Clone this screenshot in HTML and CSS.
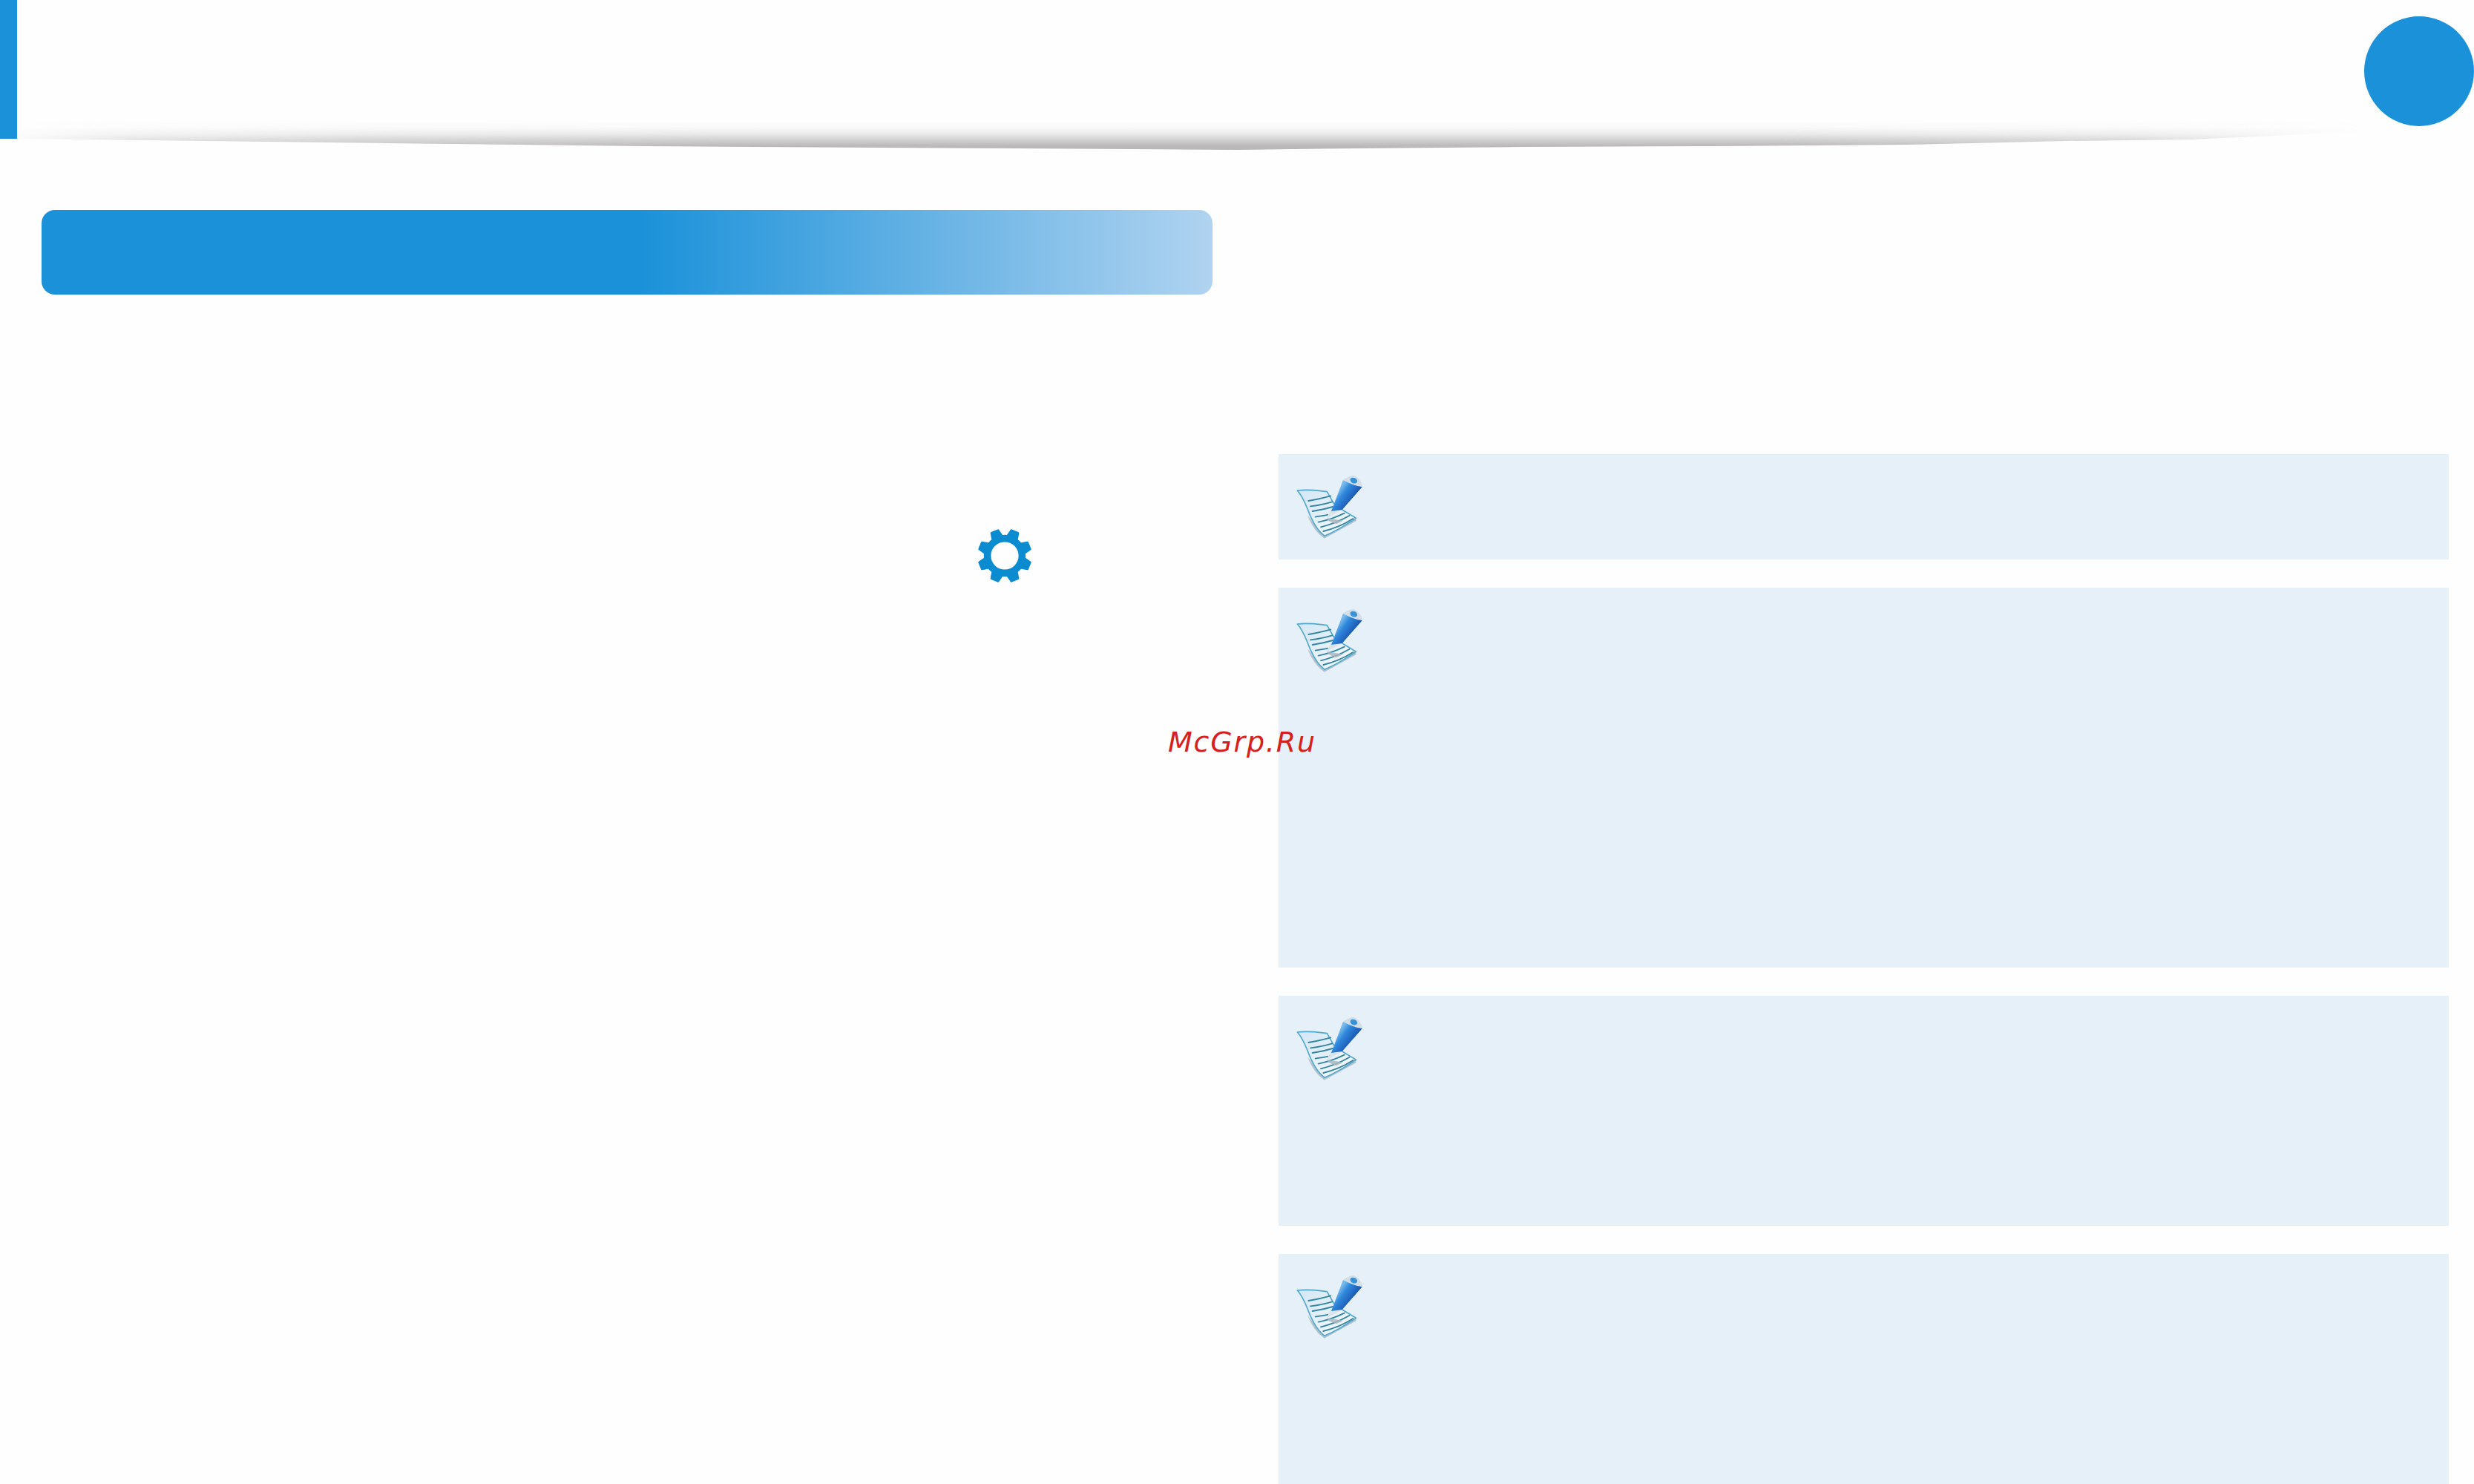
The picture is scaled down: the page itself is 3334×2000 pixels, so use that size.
FILE: index.html
```html
<!DOCTYPE html>
<html lang="ru">
<head>
<meta charset="utf-8">
<title>McGrp.Ru</title>
<link rel="stylesheet" href="styles.css">
</head>
<body>
<svg class="defs" width="0" height="0" aria-hidden="true">
  <defs>
    <linearGradient id="pencilBody" gradientUnits="userSpaceOnUse" x1="195" y1="75" x2="258" y2="122">
      <stop offset="0" stop-color="#74b8ec"/>
      <stop offset="0.3" stop-color="#2f88dc"/>
      <stop offset="0.65" stop-color="#2268c2"/>
      <stop offset="1" stop-color="#154a96"/>
    </linearGradient>
    <linearGradient id="paperFill" x1="0" y1="0" x2="1" y2="1">
      <stop offset="0" stop-color="#d3e7f5"/>
      <stop offset="0.6" stop-color="#e8f2fa"/>
      <stop offset="1" stop-color="#f7fbfe"/>
    </linearGradient>
    <symbol id="noteIcon" viewBox="0 0 315 300">
      <path d="M134 272 C105 252 82 220 66 178 L120 250 L262 192 L262 202 Z" fill="#a6b7c3" opacity=".8"/>
      <path d="M25 78 C60 74 110 78 145 83 L172 130 L210 158 L262 190 C225 215 175 245 135 262 C105 240 85 205 65 150 C55 125 40 95 25 78 Z" fill="url(#paperFill)" stroke="#52a8cc" stroke-width="5" stroke-linejoin="round"/>
      <g fill="none" stroke="#35859f" stroke-width="5.5" stroke-linecap="round">
        <path d="M70 120 C100 115 130 108 160 100"/>
        <path d="M78 142 C110 138 140 132 166 124"/>
        <path d="M86 162 C112 158 140 152 168 144"/>
        <path d="M98 185 C115 182 132 180 150 176"/>
        <path d="M110 206 C150 198 185 185 215 170"/>
        <path d="M120 226 C160 216 200 200 235 180"/>
        <path d="M130 243 C170 233 215 215 250 192"/>
      </g>
      <path d="M146 190 L210 200 L182 214 L150 200 Z" fill="#aab7c0" opacity=".85"/>
      <path d="M162 150 L142 192 L206 156 Z" fill="#dbe4ea"/>
      <path d="M210 36 L287 64 L206 156 L162 162 Z" fill="url(#pencilBody)"/>
      <path d="M210 36 C222 26 240 17 252 17 C270 24 285 42 289 62 C275 64 245 54 210 36 Z" fill="#d3dee8"/>
      <ellipse cx="253" cy="38" rx="15" ry="11" transform="rotate(25 253 38)" fill="#3a92d6"/>
    </symbol>
  </defs>
</svg>
<div class="page">
  <header class="top">
    <div class="edge"></div>
    <div class="shade"></div>
    <div class="dot"></div>
  </header>
  <main class="columns">
    <section class="col-left">
      <div class="banner"></div>
      <svg class="gear" viewBox="-37 -37 74 74" aria-hidden="true">
        <g class="gear-teeth">
          <path d="M-6.5 -27 L-4.8 -35 L4.8 -35 L6.5 -27 Z" transform="rotate(22.5)"/>
          <path d="M-6.5 -27 L-4.8 -35 L4.8 -35 L6.5 -27 Z" transform="rotate(67.5)"/>
          <path d="M-6.5 -27 L-4.8 -35 L4.8 -35 L6.5 -27 Z" transform="rotate(112.5)"/>
          <path d="M-6.5 -27 L-4.8 -35 L4.8 -35 L6.5 -27 Z" transform="rotate(157.5)"/>
          <path d="M-6.5 -27 L-4.8 -35 L4.8 -35 L6.5 -27 Z" transform="rotate(202.5)"/>
          <path d="M-6.5 -27 L-4.8 -35 L4.8 -35 L6.5 -27 Z" transform="rotate(247.5)"/>
          <path d="M-6.5 -27 L-4.8 -35 L4.8 -35 L6.5 -27 Z" transform="rotate(292.5)"/>
          <path d="M-6.5 -27 L-4.8 -35 L4.8 -35 L6.5 -27 Z" transform="rotate(337.5)"/>
        </g>
        <circle class="gear-ring" r="23.4"/>
      </svg>
    </section>
    <section class="col-right">
      <div class="note note-s"><svg class="note-icon"><use href="#noteIcon"/></svg></div>
      <div class="note note-l"><svg class="note-icon"><use href="#noteIcon"/></svg></div>
      <div class="note note-m"><svg class="note-icon"><use href="#noteIcon"/></svg></div>
      <div class="note note-m"><svg class="note-icon"><use href="#noteIcon"/></svg></div>
    </section>
  </main>
  <div class="watermark">McGrp.Ru</div>
</div>
</body>
</html>
```
FILE: styles.css
```css
* { box-sizing: border-box; }
html, body { margin: 0; padding: 0; background: #fefefe; }
.defs { position: absolute; }
.page {
  position: relative;
  width: 3334px;
  height: 2000px;
  overflow: hidden;
  background: #fefefe;
}
.top {
  position: relative;
  height: 187px;
  display: flex;
  justify-content: space-between;
  align-items: flex-start;
}
.edge { width: 23px; height: 187px; background: #1a91d9; }
.dot {
  position: relative;
  width: 148px;
  height: 148px;
  margin-top: 22px;
  border-radius: 50%;
  background: #1a91d9;
}
.shade {
  position: absolute;
  left: 23px;
  top: 150px;
  width: 3170px;
  height: 54px;
  background: linear-gradient(to bottom, rgba(184,182,182,0) 22%, rgba(184,182,182,.06) 40%, rgba(184,182,182,.3) 58%, rgba(184,182,182,.65) 72%, rgba(184,182,182,.95) 86%, #b8b6b6 96%);
  -webkit-mask-image: linear-gradient(to right, rgba(0,0,0,.1) 0, rgba(0,0,0,.55) 5%, rgba(0,0,0,.85) 15%, #000 30%, #000 75%, rgba(0,0,0,.75) 90%, rgba(0,0,0,0) 100%);
  mask-image: linear-gradient(to right, rgba(0,0,0,.1) 0, rgba(0,0,0,.55) 5%, rgba(0,0,0,.85) 15%, #000 30%, #000 75%, rgba(0,0,0,.75) 90%, rgba(0,0,0,0) 100%);
  clip-path: polygon(0 0, 100% 0, 100% 27px, 2931px 38px, 2761px 40px, 2548px 45px, 2282px 47px, 2027px 48px, 1804px 50px, 1644px 52px, 1347px 50px, 847px 47px, 498px 43px, 250px 40px, 0 37px);
}
.columns {
  display: flex;
  gap: 89px;
  margin-left: 56px;
  padding-top: 96px;
}
.col-left { width: 1578px; }
.banner {
  height: 114px;
  border-radius: 18px;
  background: linear-gradient(to right, #1a91d9 0, #1a91d9 51%, #b0d3f0 100%);
}
.gear {
  display: block;
  width: 74px;
  height: 74px;
  margin: 315px 0 0 1261px;
}
.gear-teeth path {
  fill: #0b8bd0;
  stroke: #0b8bd0;
  stroke-width: 3;
  stroke-linejoin: round;
}
.gear-ring { fill: none; stroke: #0b8bd0; stroke-width: 9.6; }
.col-right {
  width: 1577px;
  display: flex;
  flex-direction: column;
  gap: 38px;
  padding-top: 329px;
}
.note { background: #e5f0f9; padding: 23px 0 0 17px; }
.note-s { height: 142px; }
.note-l { height: 512px; }
.note-m { height: 310px; }
.note-icon { display: block; width: 105px; height: 100px; filter: blur(.5px); }
.watermark {
  position: absolute;
  left: 1574px;
  top: 977px;
  font-family: "DejaVu Sans", sans-serif;
  font-style: italic;
  font-size: 38px;
  line-height: 46px;
  letter-spacing: 1.8px;
  color: #d62020;
  white-space: nowrap;
}
```
